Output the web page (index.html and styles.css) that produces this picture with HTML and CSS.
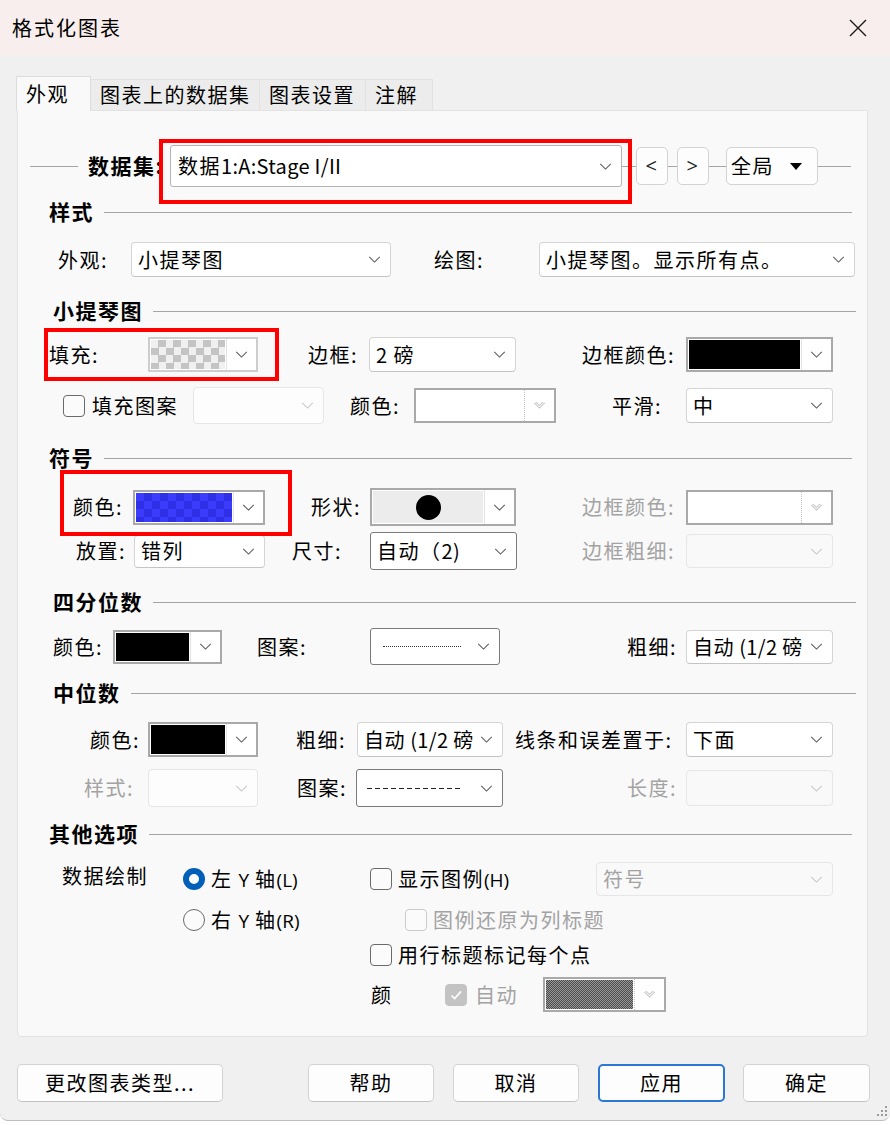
FILE: index.html
```html
<!DOCTYPE html>
<html lang="zh-CN">
<head>
  <meta charset="UTF-8" />
  <title>格式化图表</title>
  <link rel="stylesheet" href="styles.css">
</head>
<body>
<div class="window">
  <div class="titlebar">
    <span class="title">格式化图表</span>
    <svg class="close" viewBox="0 0 18 18"><path d="M1 1L17 17M17 1L1 17"/></svg>
  </div>

  <div class="tabs">
    <span class="tab on w-75">外观</span>
    <span class="tab w-170">图表上的数据集</span>
    <span class="tab w-107">图表设置</span>
    <span class="tab w-68">注解</span>
  </div>

  <div class="panel">
    <!-- 数据集 -->
    <div class="row r-set">
      <span class="ln ml-12 w-48"></span>
      <span class="hd-text ml-10 w-82">数据集:</span>
      <div class="mark mark-set">
        <div class="combo big w-452"><span class="val">数据<span class="num">1:A:Stage I/II</span></span><svg class="chev" viewBox="0 0 14 8"><path d="M1 1l6 6 6-6"/></svg></div>
      </div>
      <span class="ln w-14"></span>
      <span class="nav w-32">&lt;</span>
      <span class="ln w-9"></span>
      <span class="nav w-32">&gt;</span>
      <span class="ln w-17"></span>
      <span class="nav scope w-92">全局<svg class="tri" viewBox="0 0 12 7"><path d="M0 0h12L6 7z"/></svg></span>
      <span class="ln w-33"></span>
    </div>

    <!-- 样式 -->
    <div class="hd ga hd-style">样式</div>
    <div class="row r-look">
      <span class="lb ml-40 w-73">外观:</span>
      <div class="combo w-260"><span class="val">小提琴图</span><svg class="chev" viewBox="0 0 14 8"><path d="M1 1l6 6 6-6"/></svg></div>
      <span class="lb ml-43 w-105">绘图:</span>
      <div class="combo w-316"><span class="val">小提琴图。显示所有点。</span><svg class="chev" viewBox="0 0 14 8"><path d="M1 1l6 6 6-6"/></svg></div>
    </div>

    <!-- 小提琴图 -->
    <div class="hd gb hd-violin">小提琴图</div>
    <div class="row r-fill">
      <div class="mark mark-fill ml-31">
        <span class="lb w-99">填充:</span>
        <div class="swatch light w-110"><span class="fill f-check"></span><span class="drop"><svg class="chev" viewBox="0 0 14 8"><path d="M1 1l6 6 6-6"/></svg></span></div>
      </div>
      <span class="lb ml-50 w-61">边框:</span>
      <div class="combo w-147"><span class="val"><span class="num">2</span>&nbsp;磅</span><svg class="chev" viewBox="0 0 14 8"><path d="M1 1l6 6 6-6"/></svg></div>
      <span class="lb ml-66 w-104">边框颜色:</span>
      <div class="swatch w-147"><span class="fill f-black"></span><span class="drop"><svg class="chev" viewBox="0 0 14 8"><path d="M1 1l6 6 6-6"/></svg></span></div>
    </div>
    <div class="row r-pattern">
      <span class="cb ml-45"></span>
      <span class="lb pl-7 w-108">填充图案</span>
      <div class="combo dim blank w-131 h-37"><span class="val"></span><svg class="chev" viewBox="0 0 14 8"><path d="M1 1l6 6 6-6"/></svg></div>
      <span class="lb ml-26 w-64">颜色:</span>
      <div class="swatch dim w-142"><span class="fill"></span><span class="drop"><svg class="chev" viewBox="0 0 14 8"><path d="M1 1l6 6 6-6M1 -2l6 6 6-6"/></svg></span></div>
      <span class="lb ml-56 w-74">平滑:</span>
      <div class="combo w-147"><span class="val">中</span><svg class="chev" viewBox="0 0 14 8"><path d="M1 1l6 6 6-6"/></svg></div>
    </div>

    <!-- 符号 -->
    <div class="hd ga hd-symbol">符号</div>
    <div class="row r-sym1">
      <div class="mark mark-sym ml-55">
        <span class="lb w-60">颜色:</span>
        <div class="swatch w-132"><span class="fill f-blue"></span><span class="drop"><svg class="chev" viewBox="0 0 14 8"><path d="M1 1l6 6 6-6"/></svg></span></div>
      </div>
      <span class="lb ml-46 w-59">形状:</span>
      <div class="swatch shape w-146"><span class="fill f-shape"><span class="dot"></span></span><span class="drop"><svg class="chev" viewBox="0 0 14 8"><path d="M1 1l6 6 6-6"/></svg></span></div>
      <span class="lb off ml-66 w-104">边框颜色:</span>
      <div class="swatch dim w-147"><span class="fill"></span><span class="drop"><svg class="chev" viewBox="0 0 14 8"><path d="M1 1l6 6 6-6M1 -2l6 6 6-6"/></svg></span></div>
    </div>
    <div class="row r-sym2">
      <span class="lb ml-58 w-58">放置:</span>
      <div class="combo w-131 h-33"><span class="val">错列</span><svg class="chev" viewBox="0 0 14 8"><path d="M1 1l6 6 6-6"/></svg></div>
      <span class="lb ml-27 w-78">尺寸:</span>
      <div class="combo dark w-147 h-38"><span class="val">自动（<span class="num">2)</span></span><svg class="chev" viewBox="0 0 14 8"><path d="M1 1l6 6 6-6"/></svg></div>
      <span class="lb off ml-65 w-104">边框粗细:</span>
      <div class="combo dim w-147 h-34"><span class="val"></span><svg class="chev" viewBox="0 0 14 8"><path d="M1 1l6 6 6-6"/></svg></div>
    </div>

    <!-- 四分位数 -->
    <div class="hd gb hd-quart">四分位数</div>
    <div class="row r-quart">
      <span class="lb ml-35 w-60">颜色:</span>
      <div class="swatch w-109 h-34"><span class="fill f-black"></span><span class="drop"><svg class="chev" viewBox="0 0 14 8"><path d="M1 1l6 6 6-6"/></svg></span></div>
      <span class="lb ml-35 w-113">图案:</span>
      <div class="combo dark w-130 h-37"><span class="val"><span class="dots"></span></span><svg class="chev" viewBox="0 0 14 8"><path d="M1 1l6 6 6-6"/></svg></div>
      <span class="lb ml-127 w-59">粗细:</span>
      <div class="combo w-147 h-34"><span class="val tight">自动&nbsp;<span class="num">(1/2</span>&nbsp;磅</span><svg class="chev" viewBox="0 0 14 8"><path d="M1 1l6 6 6-6"/></svg></div>
    </div>

    <!-- 中位数 -->
    <div class="hd gb hd-median">中位数</div>
    <div class="row r-med1">
      <span class="lb ml-72 w-58">颜色:</span>
      <div class="swatch w-110"><span class="fill f-black"></span><span class="drop"><svg class="chev" viewBox="0 0 14 8"><path d="M1 1l6 6 6-6"/></svg></span></div>
      <span class="lb ml-38 w-61">粗细:</span>
      <div class="combo w-146"><span class="val tight">自动&nbsp;<span class="num">(1/2</span>&nbsp;磅</span><svg class="chev" viewBox="0 0 14 8"><path d="M1 1l6 6 6-6"/></svg></div>
      <span class="lb ml-12 w-171">线条和误差置于:</span>
      <div class="combo w-147"><span class="val">下面</span><svg class="chev" viewBox="0 0 14 8"><path d="M1 1l6 6 6-6"/></svg></div>
    </div>
    <div class="row r-med2">
      <span class="lb off ml-66 w-64">样式:</span>
      <div class="combo dim blank w-110 h-38"><span class="val"></span><svg class="chev" viewBox="0 0 14 8"><path d="M1 1l6 6 6-6"/></svg></div>
      <span class="lb ml-39 w-59">图案:</span>
      <div class="combo dark w-147 h-38"><span class="val"><span class="dashes"></span></span><svg class="chev" viewBox="0 0 14 8"><path d="M1 1l6 6 6-6"/></svg></div>
      <span class="lb off ml-124 w-59">长度:</span>
      <div class="combo dim w-147 h-36"><span class="val"></span><svg class="chev" viewBox="0 0 14 8"><path d="M1 1l6 6 6-6"/></svg></div>
    </div>

    <!-- 其他选项 -->
    <div class="hd ga hd-other">其他选项</div>
    <div class="other">
      <span class="plot">数据绘制</span>
      <div class="radios">
        <div class="opt"><span class="rb on"></span><span>左 <span class="lat">Y</span> 轴<span class="lat">(L)</span></span></div>
        <div class="opt"><span class="rb"></span><span>右 <span class="lat">Y</span> 轴<span class="lat">(R)</span></span></div>
      </div>
      <div class="opts">
        <div class="o-row o1">
          <span class="opt w-226"><span class="cb"></span><span>显示图例<span class="lat">(H)</span></span></span>
          <div class="combo dim w-237 h-34"><span class="val">符号</span><svg class="chev" viewBox="0 0 14 8"><path d="M1 1l6 6 6-6"/></svg></div>
        </div>
        <div class="o-row o2">
          <span class="opt off"><span class="cb dim"></span><span>图例还原为列标题</span></span>
        </div>
        <div class="o-row o3">
          <span class="opt"><span class="cb"></span><span>用行标题标记每个点</span></span>
        </div>
        <div class="o-row o4">
          <span class="lb ml-1 w-74">颜</span>
          <span class="cb checked"><svg viewBox="0 0 22 22"><path d="M6 11.5l3.5 3.5 7-8"/></svg></span>
          <span class="lb off ml-8 w-68">自动</span>
          <div class="swatch dim w-123"><span class="fill f-dither"></span><span class="drop"><svg class="chev" viewBox="0 0 14 8"><path d="M1 1l6 6 6-6M1 -2l6 6 6-6"/></svg></span></div>
        </div>
      </div>
    </div>
  </div>

  <div class="footer">
    <span class="btn w-206">更改图表类型...</span>
    <span class="btn ml-85 w-126">帮助</span>
    <span class="btn ml-19 w-126">取消</span>
    <span class="btn def ml-19 w-127">应用</span>
    <span class="btn ml-18 w-127">确定</span>
  </div>

  <svg class="grip" viewBox="0 0 14 14">
    <rect x="11" y="2" width="2" height="2"/>
    <rect x="7" y="6" width="2" height="2"/><rect x="11" y="6" width="2" height="2"/>
    <rect x="3" y="10" width="2" height="2"/><rect x="7" y="10" width="2" height="2"/><rect x="11" y="10" width="2" height="2"/>
  </svg>
</div>
</body>
</html>
```

FILE: styles.css
```css
* {
  box-sizing: border-box;
}

body {
  margin: 0;
  background: #fff;
  color: #000;
  font-family: "Noto Sans CJK SC", "Noto Sans", sans-serif;
  font-size: 20px;
  letter-spacing: 1.5px;
  line-height: 1.2;
}

.window {
  position: relative;
  width: 890px;
  height: 1121px;
  background: #f0f0f0;
  border-bottom: 1px solid #bdbdbd;
  border-radius: 0 0 8px 8px;
}

/* title bar */
.titlebar {
  height: 55px;
  background: #f8eeed;
  display: flex;
  align-items: center;
  justify-content: space-between;
  padding: 0 23px 0 12px;
}

.title {
  letter-spacing: 2px;
}

.close {
  width: 18px;
  height: 18px;
  stroke: #1c1c1c;
  stroke-width: 1.4;
}

/* tabs */
.tabs {
  display: flex;
  align-items: flex-end;
  height: 34px;
  margin-top: 21px;
  padding-left: 16px;
}

.tab {
  height: 31px;
  display: flex;
  align-items: center;
  padding-left: 9px;
  background: #ececec;
  border: 1px solid #e2e2e2;
  border-bottom: none;
  margin-left: -1px;
}

.tab.on {
  position: relative;
  z-index: 1;
  height: 35px;
  margin-left: 0;
  margin-bottom: -1px;
  background: #f9f9f9;
  border-color: #dcdcdc;
}

.panel {
  margin-left: 17px;
  width: 851px;
  height: 927px;
  background: #f9f9f9;
  border: 1px solid #e2e2e2;
  border-radius: 0 0 4px 4px;
}

/* rows */
.row {
  display: flex;
  align-items: center;
}

.r-set { margin-top: 34px; height: 42px; }
.r-look { margin-top: 18px; height: 35px; }
.r-fill { margin-top: 14px; height: 35px; }
.r-pattern { margin-top: 15px; height: 37px; }
.r-sym1 { margin-top: 18px; height: 38px; }
.r-sym2 { margin-top: 6px; height: 38px; }
.r-quart { margin-top: 14px; height: 37px; }
.r-med1 { margin-top: 17px; height: 35px; }
.r-med2 { margin-top: 12px; height: 38px; }

/* section headers */
.hd, .hd-text {
  font-weight: bold;
  font-size: 21px;
}

.hd {
  display: flex;
  align-items: center;
  height: 24px;
}

.hd::after {
  content: "";
  flex: 1;
  height: 1px;
  margin-left: 10px;
  background: #a5a5a5;
}

.ga { padding: 0 15px 0 31px; }
.gb { padding: 0 11px 0 35px; }

.hd-style { margin-top: 13px; }
.hd-violin { margin-top: 22px; }
.hd-symbol { margin-top: 22px; }
.hd-quart { margin-top: 20px; }
.hd-median { margin-top: 16px; }
.hd-other { margin-top: 15px; }

.ln {
  height: 1px;
  background: #a5a5a5;
  flex: none;
}

.lb {
  flex: none;
  white-space: nowrap;
}

.off {
  color: #a3a3a3;
}

/* annotations */
.mark {
  position: relative;
  display: flex;
  align-items: center;
  flex: none;
}

.mark::after {
  content: "";
  position: absolute;
  border: 4px solid #f00;
  pointer-events: none;
}

.mark-set::after { left: -11px; right: -10px; top: -6px; bottom: -17px; }
.mark-fill::after { left: -5px; right: -21px; top: -9px; bottom: -9px; }
.mark-sym::after { left: -13px; right: -27px; top: -20px; bottom: -11px; }

/* combo boxes */
.combo {
  flex: none;
  display: flex;
  align-items: center;
  height: 35px;
  padding: 0 9px 0 6px;
  background: #fff;
  border: 1px solid #d4d4d4;
  border-bottom-color: #c4c4c4;
  border-radius: 4px;
  white-space: nowrap;
}

.combo .val {
  flex: 1;
  display: flex;
  align-items: center;
  margin-right: 4px;
}

.combo .val.tight {
  letter-spacing: 0.6px;
  margin-right: 2px;
}

.num {
  letter-spacing: 0.3px;
}

.combo.big {
  height: 42px;
  padding-left: 7px;
  border-color: #b4b4b4;
  border-radius: 3px;
}

.combo.dark {
  border-color: #7a7a7a;
  border-radius: 3px;
}

.combo.dim {
  background: #f9f9f9;
  border-color: #e6e6e6;
  color: #a3a3a3;
}

.combo.blank {
  background: #fdfdfd;
}

.chev {
  flex: none;
  width: 13px;
  height: 7px;
  fill: none;
  stroke: #5c5c5c;
  stroke-width: 1.2;
}

.dim .chev {
  stroke: #c8c8c8;
}

.dots {
  width: 78px;
  margin-left: 6px;
  border-top: 1px dotted #333;
}

.dashes {
  width: 94px;
  height: 1px;
  margin-left: 4px;
  background: repeating-linear-gradient(90deg, #222 0 5px, transparent 5px 8px);
}

/* colour pickers */
.swatch {
  flex: none;
  display: flex;
  height: 35px;
  background: #fff;
  border: 2px solid #a9a9a9;
}

.swatch.light {
  border-color: #cdcdcd;
}

.swatch.shape {
  height: 38px;
}

.swatch .fill {
  flex: 1;
  margin: 1px;
}

.swatch .drop {
  width: 30px;
  display: flex;
  align-items: center;
  justify-content: center;
  border-left: 1px solid #e3e3e3;
}

.swatch.dim .drop {
  border-left: 1px dotted #c4c4c4;
}

.f-black { background: #000; }

.f-check {
  background-color: #f0f0f0;
  background-image: conic-gradient(#c4c4c4 25%, transparent 0 50%, #c4c4c4 0 75%, transparent 0);
  background-size: 15px 15px;
}

.f-blue {
  background-color: #3c3cff;
  background-image: conic-gradient(#2f2fe6 25%, transparent 0 50%, #2f2fe6 0 75%, transparent 0);
  background-size: 16px 16px;
}

.f-dither {
  background: repeating-conic-gradient(#4a4a4a 0 25%, #9a9a9a 0 50%) 0 0 / 2px 2px;
}

.f-shape {
  display: flex;
  align-items: center;
  justify-content: center;
  background: #ececec;
}

.dot {
  width: 25px;
  height: 25px;
  border-radius: 50%;
  background: #000;
}

/* dataset navigation */
.nav {
  flex: none;
  height: 38px;
  display: flex;
  align-items: center;
  justify-content: center;
  background: #fdfdfd;
  border: 1px solid #d3d3d3;
  border-radius: 5px;
  font-family: "Open Sans", sans-serif;
  color: #222;
}

.nav.scope {
  justify-content: flex-start;
  padding-left: 4px;
  font-family: inherit;
  color: #000;
}

.tri {
  width: 12px;
  height: 7px;
  margin-left: 16px;
}

/* check boxes & radios */
.cb {
  flex: none;
  width: 22px;
  height: 22px;
  border: 1px solid #6a6a6a;
  border-radius: 4px;
  background: #fbfbfb;
}

.cb.dim {
  border-color: #cbcbcb;
}

.cb.checked {
  background: #c3c3c3;
  border-color: #c3c3c3;
}

.cb.checked svg {
  display: block;
  width: 20px;
  height: 20px;
  fill: none;
  stroke: #fff;
  stroke-width: 1.8;
}

.rb {
  flex: none;
  width: 22px;
  height: 22px;
  border-radius: 50%;
  border: 1px solid #6a6a6a;
  background: #fbfbfb;
}

.rb.on {
  border: 6.5px solid #005fb8;
  background: #fff;
}

.lat {
  font-family: "Open Sans", sans-serif;
  font-size: 19px;
  letter-spacing: 0;
}

/* other options */
.other {
  display: flex;
  align-items: flex-start;
  margin-top: 16px;
  padding-left: 44px;
}

.plot {
  width: 121px;
  height: 28px;
  display: flex;
  align-items: center;
}

.radios {
  width: 187px;
}

.opt {
  display: flex;
  align-items: center;
  gap: 6px;
  height: 34px;
  white-space: nowrap;
}

.radios .opt + .opt {
  margin-top: 7px;
}

.o-row {
  display: flex;
  align-items: center;
  height: 34px;
}

.o2 { margin-top: 7px; padding-left: 35px; }
.o3 { margin-top: 1px; }
.o4 { margin-top: 5px; height: 35px; }

/* footer */
.footer {
  display: flex;
  margin-top: 27px;
  padding-left: 17px;
}

.btn {
  flex: none;
  height: 38px;
  display: flex;
  align-items: center;
  justify-content: center;
  background: #fdfdfd;
  border: 1px solid #d3d3d3;
  border-bottom-color: #c2c2c2;
  border-radius: 5px;
}

.btn.def {
  border: 2px solid #2a78d2;
}

.grip {
  position: absolute;
  right: 2px;
  bottom: 2px;
  width: 14px;
  height: 14px;
  fill: #9a9a9a;
}

/* sizes */
.ml-1 { margin-left: 1px; }
.ml-8 { margin-left: 8px; }
.ml-10 { margin-left: 10px; }
.ml-12 { margin-left: 12px; }
.ml-18 { margin-left: 18px; }
.ml-19 { margin-left: 19px; }
.ml-26 { margin-left: 26px; }
.ml-27 { margin-left: 27px; }
.ml-31 { margin-left: 31px; }
.ml-35 { margin-left: 35px; }
.ml-38 { margin-left: 38px; }
.ml-39 { margin-left: 39px; }
.ml-40 { margin-left: 40px; }
.ml-43 { margin-left: 43px; }
.ml-45 { margin-left: 45px; }
.ml-46 { margin-left: 46px; }
.ml-50 { margin-left: 50px; }
.ml-55 { margin-left: 55px; }
.ml-56 { margin-left: 56px; }
.ml-58 { margin-left: 58px; }
.ml-65 { margin-left: 65px; }
.ml-66 { margin-left: 66px; }
.ml-72 { margin-left: 72px; }
.ml-85 { margin-left: 85px; }
.ml-124 { margin-left: 124px; }
.ml-127 { margin-left: 127px; }
.pl-7 { padding-left: 7px; }

.w-9 { width: 9px; }
.w-14 { width: 14px; }
.w-17 { width: 17px; }
.w-32 { width: 32px; }
.w-33 { width: 33px; }
.w-48 { width: 48px; }
.w-58 { width: 58px; }
.w-59 { width: 59px; }
.w-60 { width: 60px; }
.w-61 { width: 61px; }
.w-64 { width: 64px; }
.w-68 { width: 68px; }
.w-73 { width: 73px; }
.w-74 { width: 74px; }
.w-75 { width: 75px; }
.w-78 { width: 78px; }
.w-82 { width: 82px; }
.w-92 { width: 92px; }
.w-99 { width: 99px; }
.w-104 { width: 104px; }
.w-105 { width: 105px; }
.w-107 { width: 107px; }
.w-108 { width: 108px; }
.w-109 { width: 109px; }
.w-110 { width: 110px; }
.w-113 { width: 113px; }
.w-123 { width: 123px; }
.w-126 { width: 126px; }
.w-127 { width: 127px; }
.w-130 { width: 130px; }
.w-131 { width: 131px; }
.w-132 { width: 132px; }
.w-142 { width: 142px; }
.w-146 { width: 146px; }
.w-147 { width: 147px; }
.w-170 { width: 170px; }
.w-171 { width: 171px; }
.w-206 { width: 206px; }
.w-226 { width: 226px; }
.w-237 { width: 237px; }
.w-260 { width: 260px; }
.w-316 { width: 316px; }
.w-452 { width: 452px; }

.h-33 { height: 33px; }
.h-34 { height: 34px; }
.h-36 { height: 36px; }
.h-37 { height: 37px; }
.h-38 { height: 38px; }
```
